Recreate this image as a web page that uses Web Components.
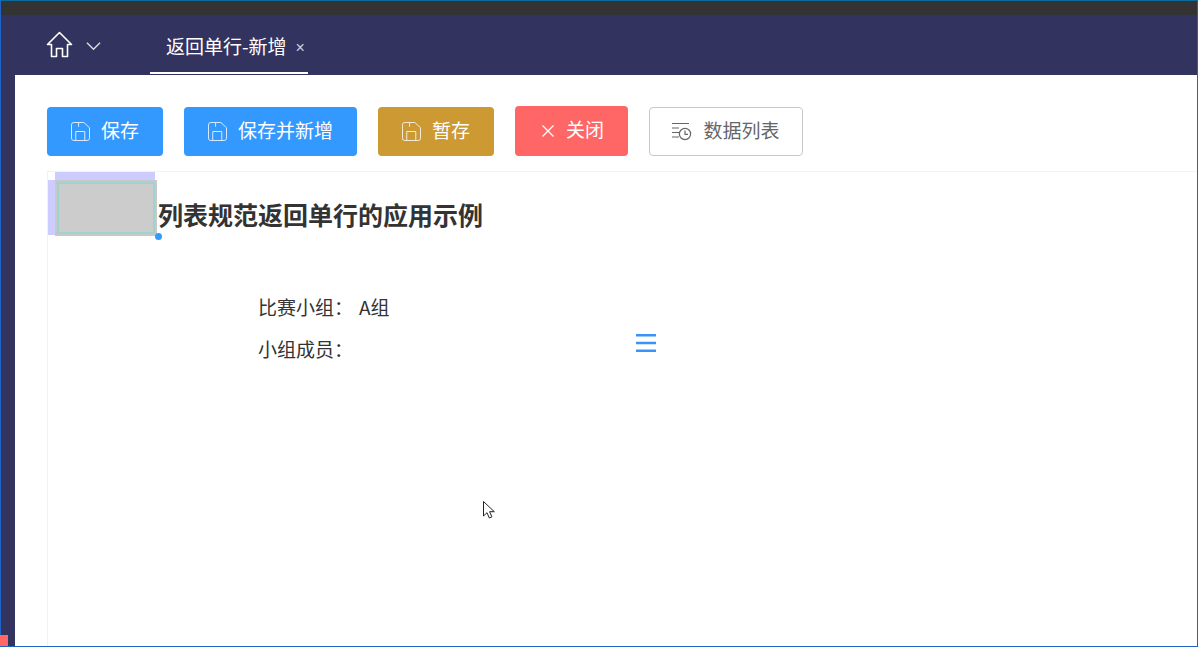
<!DOCTYPE html>
<html lang="zh">
<head>
<meta charset="utf-8">
<title>返回单行-新增</title>
<style>
    html, body {
        margin: 0;
        height: 100%;
        overflow: hidden;
        background: #fff;
        font-family: "Noto Sans CJK SC", "Liberation Sans", sans-serif;
    }
</style>
</head>
<body>
<app-window>
    <tab-bar slot="tabs" label="返回单行-新增"></tab-bar>
    <tool-bar slot="tools">
        <tool-button kind="primary" icon="save" style="width:116px">保存</tool-button>
        <tool-button kind="primary" icon="save" style="width:173px">保存并新增</tool-button>
        <tool-button kind="warn" icon="save" style="width:116px">暂存</tool-button>
        <tool-button kind="danger" icon="close" style="width:113px">关闭</tool-button>
        <tool-button kind="plain" icon="list" style="width:154px">数据列表</tool-button>
    </tool-bar>
    <form-panel slot="panel" heading="列表规范返回单行的应用示例">
        <form-row label="比赛小组：">A组</form-row>
        <form-row label="小组成员：" menu></form-row>
    </form-panel>
</app-window>

<script>
const ICONS = {
    save: `<svg width="19" height="19" viewBox="0 0 20 20" fill="none" stroke="currentColor" stroke-width="1" opacity=".85">
        <path d="M3 .5h10.500l6 5.500v11a2.500 2.500 0 0 1-2.500 2.500h-14a2.500 2.500 0 0 1-2.500-2.500v-14a2.500 2.500 0 0 1 2.500-2.500z"/>
        <path d="M8 .5v4.500"/>
        <path d="M5 19.500v-9.500h9.500v9.500"/></svg>`,
    close: `<svg width="14" height="14" viewBox="0 0 14 14" fill="none" stroke="currentColor" stroke-width="1.300">
        <path d="M1.500 1.500l11 11M12.500 1.500l-11 11"/></svg>`,
    list: `<svg width="20" height="20" viewBox="0 0 20 20" fill="none" stroke="currentColor" stroke-width="1.200">
        <path d="M0 1.500h17M0 6h7M0 10.500h7M0 15h7"/>
        <circle cx="13" cy="12" r="5.600"/><path d="M13 8.500v3.900h3"/></svg>`
};

class AppWindow extends HTMLElement {
    constructor() {
        super();
        this.attachShadow({mode: 'open'}).innerHTML = `
        <style>
            :host {
                display: flex;
                flex-direction: column;
                box-sizing: border-box;
                width: 1198px;
                height: 647px;
                border: 1px solid #1f63c4;
                border-top-color: #0a6a9c;
                background: #33335f;
                position: relative;
            }
            #top { height: 14px; background: #333333; flex: none; }
            #main {
                flex: 1;
                margin-left: 14px;
                background: #fff;
                display: flex;
                flex-direction: column;
                min-height: 0;
            }
            #badge {
                position: absolute;
                left: -1px;
                bottom: 0;
                width: 8px;
                height: 11px;
                background: #ff6666;
            }
            #pointer { position: absolute; left: 482px; top: 500px; }
        </style>
        <div id="top"></div>
        <slot name="tabs"></slot>
        <div id="main">
            <slot name="tools"></slot>
            <slot name="panel"></slot>
        </div>
        <div id="badge"></div>
        <svg id="pointer" width="14" height="20" viewBox="0 0 14 20">
            <path d="M.5.5v14.500l3.500-3.300 2.300 5.300 2.600-1.100-2.300-5.200h4.700z" fill="#fff" stroke="#222" stroke-width="1"/>
        </svg>`;
    }
}

class TabBar extends HTMLElement {
    constructor() {
        super();
        this.attachShadow({mode: 'open'}).innerHTML = `
        <style>
            :host {
                display: flex;
                align-items: stretch;
                flex: none;
                height: 60px;
                padding-left: 45px;
                color: #fff;
                font-size: 19px;
            }
            #home { display: flex; align-items: center; gap: 13px; width: 104px; box-sizing: border-box; padding-bottom: 1px; }
            #chevron { margin-top: 3px; }
            #tab {
                display: flex;
                align-items: center;
                box-sizing: border-box;
                width: 158px;
                height: 59px;
                padding: 4px 0 0 16px;
                border-bottom: 2px solid #fff;
                white-space: nowrap;
            }
            #x { margin-left: 9px; padding-top: 5px; font-size: 16px; color: #d0d0d8; font-family: "Liberation Sans", sans-serif; }
        </style>
        <div id="home">
            <svg width="27" height="27" viewBox="0 0 27 27" fill="none" stroke="#fff" stroke-width="1.600" stroke-linejoin="round">
                <path d="M13.500 1.500L1.500 13.500h4v12h5v-8h6v8h5v-12h4z"/>
            </svg>
            <svg id="chevron" width="15" height="10" viewBox="0 0 16 10" fill="none" stroke="#d5dfe0" stroke-width="1.500">
                <path d="M1 1.500l7 7 7-7"/>
            </svg>
        </div>
        <div id="tab"><span id="label"></span><span id="x">×</span></div>`;
    }

    connectedCallback() {
        this.shadowRoot.querySelector('#label').textContent = this.getAttribute('label');
    }
}

class ToolBar extends HTMLElement {
    constructor() {
        super();
        this.attachShadow({mode: 'open'}).innerHTML = `
        <style>
            :host {
                display: flex;
                flex: none;
                align-items: flex-end;
                gap: 21px;
                height: 81px;
                padding-left: 32px;
            }
        </style>
        <slot></slot>`;
    }
}

class ToolButton extends HTMLElement {
    constructor() {
        super();
        this.attachShadow({mode: 'open'}).innerHTML = `
        <style>
            :host {
                display: flex;
                align-items: center;
                justify-content: center;
                gap: 11px;
                box-sizing: border-box;
                height: 49px;
                border-radius: 4px;
                font-size: 19px;
                color: #fff;
                background: #3399ff;
                white-space: nowrap;
            }
            :host([kind="warn"]) { background: #cc9933; }
            :host([kind="danger"]) { background: #ff6666; height: 50px; padding-left: 2px; }
            :host([kind="plain"]) { background: #fff; color: #666; border: 1px solid #c8c8c8; }
            #icon { display: flex; }
            #text { padding-bottom: 5px; }
            svg { display: block; }
        </style>
        <span id="icon"></span><span id="text"><slot></slot></span>`;
    }

    connectedCallback() {
        this.shadowRoot.querySelector('#icon').innerHTML = ICONS[this.getAttribute('icon')];
    }
}

class FormPanel extends HTMLElement {
    constructor() {
        super();
        this.attachShadow({mode: 'open'}).innerHTML = `
        <style>
            :host {
                display: block;
                flex: 1;
                margin: 15px 0 0 32px;
                border-top: 1px solid #d5ffff;
                border-left: 1px solid #d5ffff;
                color: #333;
                position: relative;
            }
            #head { display: flex; align-items: flex-start; height: 64px; }
            #strip-top { position: absolute; left: 7px; top: 0; width: 100px; height: 8px; background: #ccccff; }
            #strip-left { position: absolute; left: 0; top: 8px; width: 7px; height: 55px; background: #ccccff; }
            #image {
                box-sizing: border-box;
                width: 102px;
                height: 56px;
                margin: 8px 0 0 7px;
                flex: none;
                background: #cccccc;
                border: 2px solid #c8c8c8;
                box-shadow: inset 0 0 0 2px #a0d2ce;
                position: relative;
            }
            #dot {
                position: absolute;
                right: -7px;
                bottom: -6px;
                width: 7px;
                height: 7px;
                border-radius: 50%;
                background: #3399ff;
            }
            h1 {
                margin: 0 0 0 1px;
                font-size: 25px;
                line-height: 34px;
                font-weight: 700;
                color: #333;
                white-space: nowrap;
                padding-top: 25px;
            }
            #rows { padding: 53px 0 0 210px; display: flex; flex-direction: column; gap: 8px; }
        </style>
        <div id="strip-top"></div>
        <div id="strip-left"></div>
        <div id="head">
            <div id="image"><div id="dot"></div></div>
            <h1></h1>
        </div>
        <div id="rows"><slot></slot></div>`;
    }

    connectedCallback() {
        this.shadowRoot.querySelector('h1').textContent = this.getAttribute('heading');
    }
}

class FormRow extends HTMLElement {
    constructor() {
        super();
        this.attachShadow({mode: 'open'}).innerHTML = `
        <style>
            :host {
                display: flex;
                align-items: center;
                width: 400px;
                height: 34px;
                font-size: 19px;
                color: #333;
                white-space: nowrap;
            }
            #label { width: 101px; flex: none; }
            #value { flex: 1; display: flex; align-items: center; }
            svg { margin: -10px 0 0 277px; }
        </style>
        <span id="label"></span>
        <span id="value"><slot></slot></span>`;
    }

    connectedCallback() {
        this.shadowRoot.querySelector('#label').textContent = this.getAttribute('label');
        if (this.hasAttribute('menu')) {
            this.shadowRoot.querySelector('#value').insertAdjacentHTML('beforeend',
                `<svg width="20" height="18" viewBox="0 0 20 18" fill="none" stroke="#3b92f8" stroke-width="2.400">
                    <path d="M0 1.200h20M0 9h20M0 16.800h20"/></svg>`);
        }
    }
}

customElements.define('app-window', AppWindow);
customElements.define('tab-bar', TabBar);
customElements.define('tool-bar', ToolBar);
customElements.define('tool-button', ToolButton);
customElements.define('form-panel', FormPanel);
customElements.define('form-row', FormRow);
</script>
</body>
</html>
